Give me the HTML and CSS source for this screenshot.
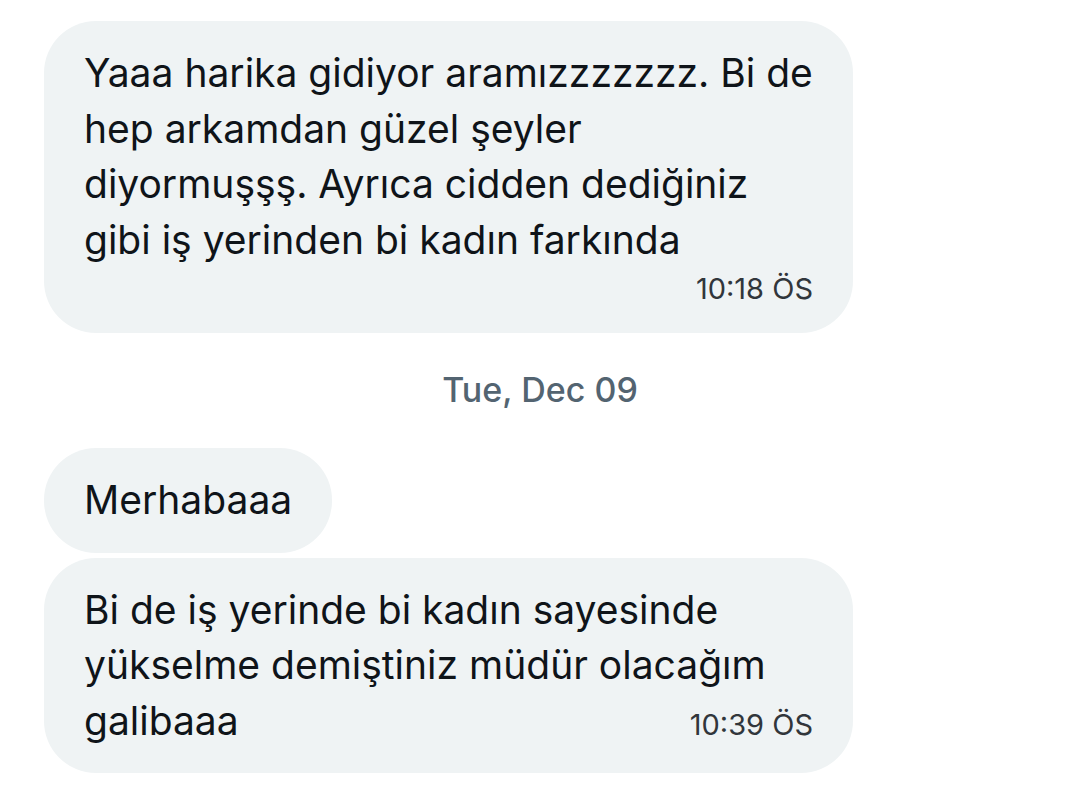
FILE: index.html
```html
<!DOCTYPE html>
<html lang="tr">
<head>
<meta charset="utf-8">
<link rel="stylesheet" href="styles.css">
</head>
<body>
<main class="chat">
  <div class="bubble bubble--wide">
    <p class="text">Yaaa harika gidiyor aramızzzzzzz. Bi de<br>hep arkamdan güzel şeyler<br>diyormuşşş. Ayrıca cidden dediğiniz<br>gibi iş yerinden bi kadın farkında</p>
    <div class="meta"><span class="time">10:18 ÖS</span></div>
  </div>

  <div class="date">Tue, Dec 09</div>

  <div class="bubble">
    <p class="text">Merhabaaa</p>
  </div>
  <div class="bubble bubble--wide">
    <p class="text">Bi de iş yerinde bi kadın sayesinde<br>yükselme demiştiniz müdür olacağım</p>
    <div class="last-row"><span class="text">galibaaa</span><span class="time">10:39 ÖS</span></div>
  </div>
</main>
</body>
</html>
```

FILE: styles.css
```css
html, body {
  margin: 0;
  padding: 0;
  background: #ffffff;
}
body {
  font-family: Inter, Roboto, sans-serif;
  color: #0f1419;
}
.chat {
  display: flex;
  flex-direction: column;
  align-items: flex-start;
  padding: 21px 0 0 44px;
}
.bubble {
  background: #eff3f4;
  border-radius: 52px;
  padding: 24px 40px 25px 40px;
  box-sizing: content-box;
}
.bubble--wide {
  width: 729px;
}
.bubble + .bubble {
  margin-top: 5px;
}
.text {
  margin: 0;
  font-size: 39px;
  line-height: 55.5px;
  color: #0f1419;
}
.meta {
  display: flex;
  justify-content: flex-end;
  margin-top: 3px;
  line-height: 38px;
}
.time {
  font-size: 29px;
  color: #31363b;
  line-height: 38px;
}
.last-row {
  display: flex;
  justify-content: space-between;
  align-items: baseline;
}
.date {
  align-self: stretch;
  text-align: center;
  padding-right: 44px;
  margin: 37px 0 38px;
  font-size: 34px;
  font-weight: 500;
  line-height: 40px;
  color: #536471;
}
```
